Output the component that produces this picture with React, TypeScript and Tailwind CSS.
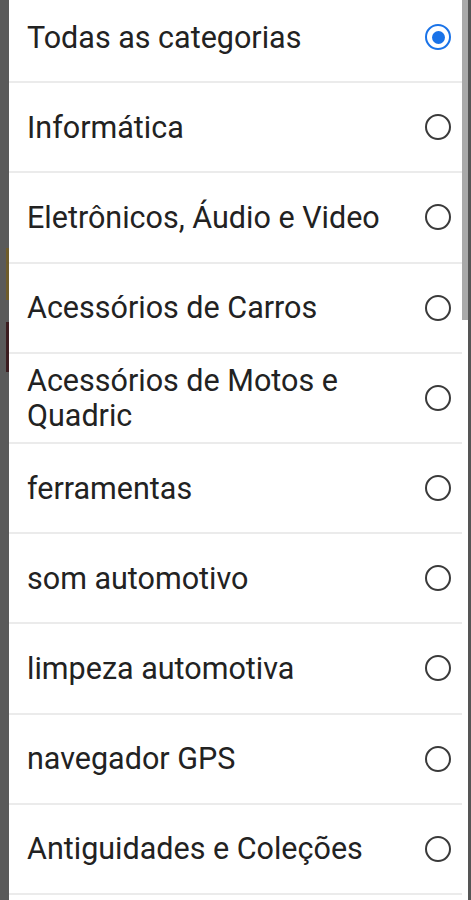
const categories = [
  "Todas as categorias",
  "Informática",
  "Eletrônicos, Áudio e Video",
  "Acessórios de Carros",
  "Acessórios de Motos e Quadric",
  "ferramentas",
  "som automotivo",
  "limpeza automotiva",
  "navegador GPS",
  "Antiguidades e Coleções",
];

function Radio({ checked }: { checked: boolean }) {
  if (checked) {
    return (
      <span className="flex h-[26px] w-[26px] shrink-0 items-center justify-center rounded-full border-[2.5px] border-[#1a73e8]">
        <span className="h-[13px] w-[13px] rounded-full bg-[#1a73e8]" />
      </span>
    );
  }
  return (
    <span className="h-[26px] w-[26px] shrink-0 rounded-full border-[2.5px] border-[#3a3a3a]" />
  );
}

export default function App() {
  const selected = 0;

  return (
    <div className="flex h-[900px] w-[471px] overflow-hidden bg-[#5a5a5a] font-['Roboto',sans-serif]">
      {/* page behind the sheet */}
      <div className="flex w-[9px] flex-col">
        <div className="h-[248px]" />
        <div className="ml-[6px] h-[52px] w-[3px] bg-[#6e5c2c]" />
        <div className="h-[22px]" />
        <div className="ml-[6px] h-[50px] w-[3px] bg-[#3b1c1f]" />
      </div>

      <div className="flex flex-1 bg-white">
        <ul className="-mt-[7px] flex-1">
          {categories.map((name, i) => (
            <li
              key={name}
              className="flex h-[90.2px] items-center justify-between border-b-2 border-[#ebebeb] pl-[18px] pr-[11px]"
            >
              <span className="min-w-0 flex-1 pr-6 text-[30.5px] leading-[35px] text-[#222222]">
                {name}
              </span>
              <Radio checked={i === selected} />
            </li>
          ))}
        </ul>

        <div className="w-[6px] bg-white">
          <div className="h-[320px] bg-[#a9a9a9]" />
        </div>
      </div>

      <div className="w-[3px] bg-[#555555]" />
    </div>
  );
}
